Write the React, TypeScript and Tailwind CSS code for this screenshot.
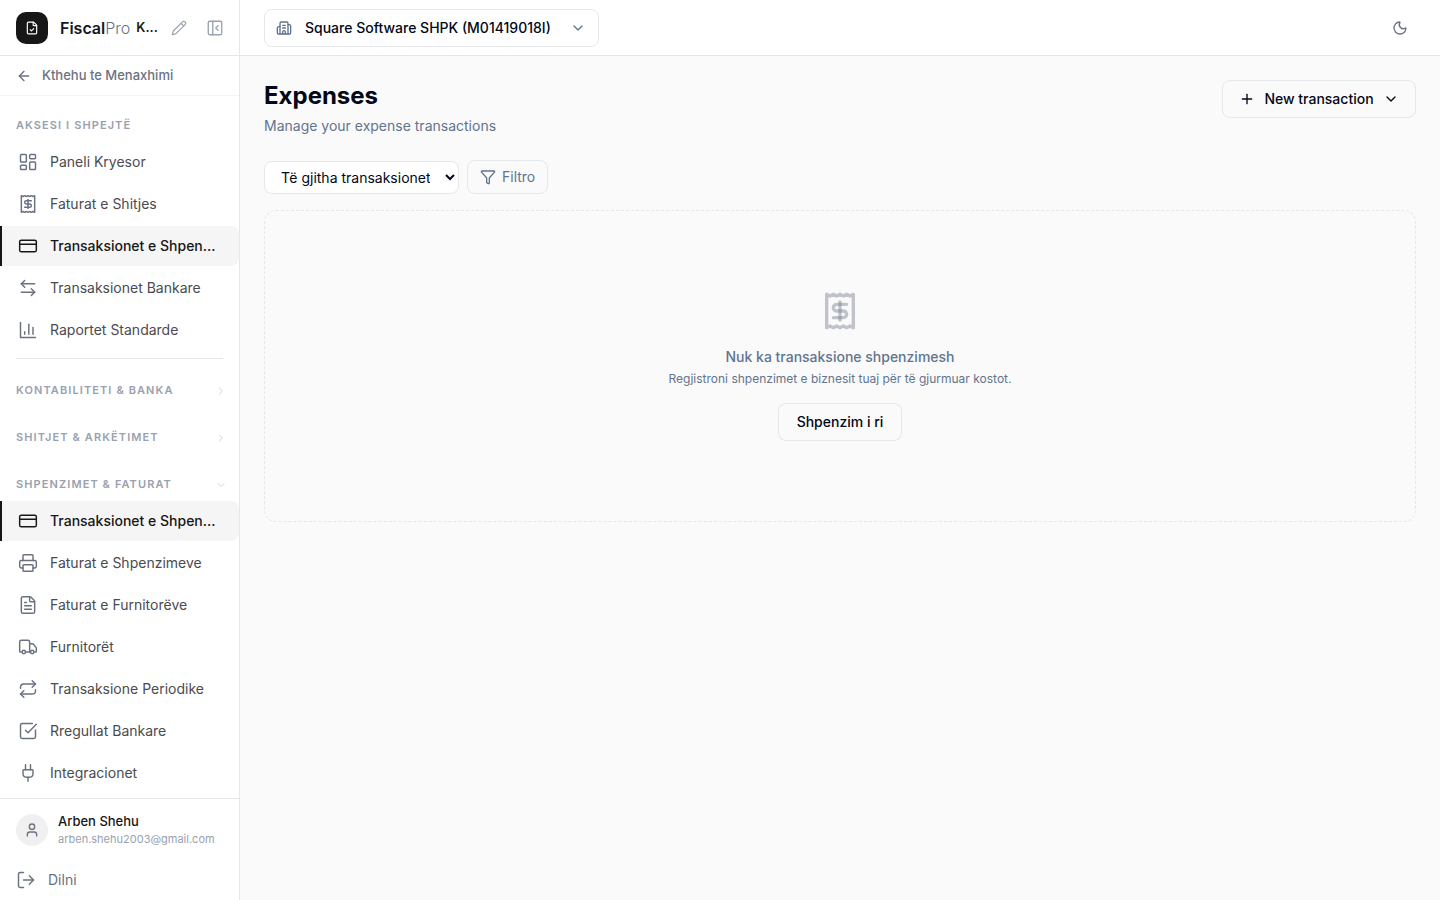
import React, { FC } from "react";

// Icons
import {
  ArrowLeft,
  ArrowLeftRight,
  Building2,
  ChevronDown,
  ChevronRight,
  CreditCard,
  FileCheck,
  FileText,
  Funnel,
  LayoutDashboard,
  LogOut,
  Moon,
  PanelLeftClose,
  Pencil,
  Plug,
  Plus,
  Printer,
  Repeat,
  SquareCheckBig,
  Truck,
  User,
} from "lucide-react";

// types
type IIconProps = {
  className?: string;
  strokeWidth?: number;
};

type INavItem = {
  label: string;
  icon: FC<IIconProps>;
  active?: boolean;
};

type INavListProps = {
  items: INavItem[];
};

type ISectionTitleProps = {
  title: string;
  open?: boolean;
};

const ReceiptDollar: FC<IIconProps> = ({ className, strokeWidth = 2 }) => (
  <svg
    viewBox="0 0 24 24"
    fill="none"
    stroke="currentColor"
    strokeWidth={strokeWidth}
    strokeLinecap="round"
    strokeLinejoin="round"
    className={className}
    aria-hidden="true"
  >
    <path d="M4 2v20l2-1 2 1 2-1 2 1 2-1 2 1 2-1 2 1V2l-2 1-2-1-2 1-2-1-2 1-2-1-2 1Z" />
    <path d="M16 8h-6a2 2 0 1 0 0 4h4a2 2 0 1 1 0 4H8" />
    <path d="M12 17.5v-11" />
  </svg>
);

const BarChart: FC<IIconProps> = ({ className, strokeWidth = 2 }) => (
  <svg
    viewBox="0 0 24 24"
    fill="none"
    stroke="currentColor"
    strokeWidth={strokeWidth}
    strokeLinecap="round"
    strokeLinejoin="round"
    className={className}
    aria-hidden="true"
  >
    <path d="M3 3v18h18" />
    <path d="M18 17V9" />
    <path d="M13 17V5" />
    <path d="M8 17v-3" />
  </svg>
);

const quickAccess: INavItem[] = [
  { label: "Paneli Kryesor", icon: LayoutDashboard },
  { label: "Faturat e Shitjes", icon: ReceiptDollar },
  { label: "Transaksionet e Shpen...", icon: CreditCard, active: true },
  { label: "Transaksionet Bankare", icon: ArrowLeftRight },
  { label: "Raportet Standarde", icon: BarChart },
];

const expenses: INavItem[] = [
  { label: "Transaksionet e Shpen...", icon: CreditCard, active: true },
  { label: "Faturat e Shpenzimeve", icon: Printer },
  { label: "Faturat e Furnitorëve", icon: FileText },
  { label: "Furnitorët", icon: Truck },
  { label: "Transaksione Periodike", icon: Repeat },
  { label: "Rregullat Bankare", icon: SquareCheckBig },
  { label: "Integracionet", icon: Plug },
];

const NavList: FC<INavListProps> = ({ items }) => {
  return (
    <ul className="mt-2 flex flex-col gap-0.5">
      {items.map(({ label, icon: Icon, active }) => (
        <li key={label}>
          <a
            href="#"
            className={
              active
                ? "flex h-10 items-center gap-3 rounded-r-lg border-l-2 border-[#171717] bg-[#f5f5f5] pl-4 text-sm font-medium text-[#171717]"
                : "flex h-10 items-center gap-3 rounded-r-lg border-l-2 border-transparent pl-4 text-sm text-[#4b4b4f] hover:bg-[#f5f5f5]"
            }
          >
            <Icon
              className={
                active ? "size-5 shrink-0" : "size-5 shrink-0 text-gray-500"
              }
              strokeWidth={1.75}
            />
            <span className="whitespace-nowrap">{label}</span>
          </a>
        </li>
      ))}
    </ul>
  );
};

const SectionTitle: FC<ISectionTitleProps> = ({ title, open }) => {
  return (
    <button className="flex w-full items-center justify-between pl-4 pr-3 text-[11px] leading-[17px] font-semibold tracking-widest text-gray-400 uppercase">
      {title}
      {open ? (
        <ChevronDown className="size-3 text-gray-300" />
      ) : (
        <ChevronRight className="size-3 text-gray-300" />
      )}
    </button>
  );
};

const Sidebar: FC = () => {
  return (
    <aside className="flex w-60 shrink-0 flex-col border-r border-gray-200 bg-white">
      <div className="flex h-14 shrink-0 items-center border-b border-gray-200 pl-4 pr-[15px]">
        <div className="flex size-8 shrink-0 items-center justify-center rounded-[10px] bg-[#171717] text-white">
          <FileCheck className="size-3.5" />
        </div>
        <div className="ml-3 shrink-0 text-base text-gray-900">
          <span className="font-semibold">Fiscal</span>
          <span className="font-light text-gray-500">Pro</span>
        </div>
        <span className="ml-1.5 shrink-0 text-[13px] font-semibold text-[#171717]">
          K...
        </span>
        <button aria-label="Ndrysho" className="ml-auto text-gray-400">
          <Pencil className="size-4" strokeWidth={1.75} />
        </button>
        <button aria-label="Mbyll menunë" className="ml-[19px] text-gray-400">
          <PanelLeftClose className="size-[18px]" strokeWidth={1.75} />
        </button>
      </div>

      <a
        href="#"
        className="flex h-10 shrink-0 items-center gap-2.5 border-b border-gray-100 px-4 text-[13px] font-medium text-gray-500"
      >
        <ArrowLeft className="size-4" />
        Kthehu te Menaxhimi
      </a>

      <nav className="min-h-0 flex-1 overflow-hidden pt-[21px]">
        <h2 className="pl-4 text-[11px] leading-[17px] font-semibold tracking-widest text-gray-400 uppercase">
          Aksesi i shpejtë
        </h2>
        <NavList items={quickAccess} />
        <hr className="mx-4 mt-2 border-gray-200" />
        <div className="mt-[23px] flex flex-col gap-[30px]">
          <SectionTitle title="Kontabiliteti & Banka" />
          <SectionTitle title="Shitjet & Arkëtimet" />
          <SectionTitle title="Shpenzimet & Faturat" open />
        </div>
        <NavList items={expenses} />
      </nav>

      <div className="shrink-0 border-t border-gray-200 px-4 pt-3">
        <div className="flex items-center gap-2.5">
          <div className="flex size-8 shrink-0 items-center justify-center rounded-full bg-[#f0f0f0] text-gray-500">
            <User className="size-4" />
          </div>
          <div className="min-w-0">
            <p className="text-[13px] leading-5 font-medium text-[#171717]">
              Arben Shehu
            </p>
            <p className="text-[11px] leading-[17px] text-gray-400">
              arben.shehu2003@gmail.com
            </p>
          </div>
        </div>
        <button className="mt-3 flex h-10 w-full items-center gap-3 text-sm text-gray-500">
          <LogOut className="size-5" strokeWidth={1.75} />
          Dilni
        </button>
      </div>
    </aside>
  );
};

const Topbar: FC = () => {
  return (
    <header className="flex h-14 shrink-0 items-center justify-between border-b border-gray-200 bg-white px-6">
      <button className="flex h-[38px] min-w-[335px] items-center rounded-lg border border-gray-200 pl-[11px] pr-3 text-sm font-medium text-[#020817]">
        <Building2 className="mr-[13px] size-4 text-slate-500" />
        Square Software SHPK (M01419018I)
        <ChevronDown className="ml-auto size-4 text-slate-500" />
      </button>
      <button
        aria-label="Ndrysho temën"
        className="flex size-8 items-center justify-center text-gray-500"
      >
        <Moon className="size-4" />
      </button>
    </header>
  );
};

const App: FC = () => {
  return (
    <div className="flex h-screen font-['Inter',sans-serif]">
      <Sidebar />
      <div className="flex min-w-0 flex-1 flex-col bg-[#fafafa]">
        <Topbar />
        <main className="flex flex-col p-6">
          <div className="flex items-start justify-between">
            <div>
              <h1 className="text-2xl font-bold text-[#020817]">Expenses</h1>
              <p className="mt-1 text-sm text-slate-500">
                Manage your expense transactions
              </p>
            </div>
            <button className="flex h-[38px] min-w-[194px] items-center justify-between rounded-lg border border-gray-200 px-4 text-sm font-medium text-[#020817]">
              <Plus className="size-4" />
              New transaction
              <ChevronDown className="size-4" />
            </button>
          </div>

          <div className="mt-6 flex items-end gap-2">
            <select
              aria-label="Transaksionet"
              className="h-[33px] w-[195px] rounded-lg border border-gray-200 bg-white px-3 text-sm text-[#020817]"
            >
              <option>Të gjitha transaksionet</option>
            </select>
            <button className="flex h-[34px] items-center gap-1.5 rounded-lg border border-gray-200 px-3 text-sm text-slate-500">
              <Funnel className="size-4" />
              Filtro
            </button>
          </div>

          <section className="mt-4 flex flex-col items-center rounded-xl border border-dashed border-gray-200 py-20">
            <ReceiptDollar className="size-10 text-gray-500/40" />
            <p className="mt-4 text-sm font-medium text-slate-500">
              Nuk ka transaksione shpenzimesh
            </p>
            <p className="mt-1 text-xs text-slate-500">
              Regjistroni shpenzimet e biznesit tuaj për të gjurmuar kostot.
            </p>
            <button className="mt-4 h-[38px] min-w-[124px] rounded-lg border border-gray-200 px-4 text-sm font-medium text-[#020817]">
              Shpenzim i ri
            </button>
          </section>
        </main>
      </div>
    </div>
  );
};

export default App;
